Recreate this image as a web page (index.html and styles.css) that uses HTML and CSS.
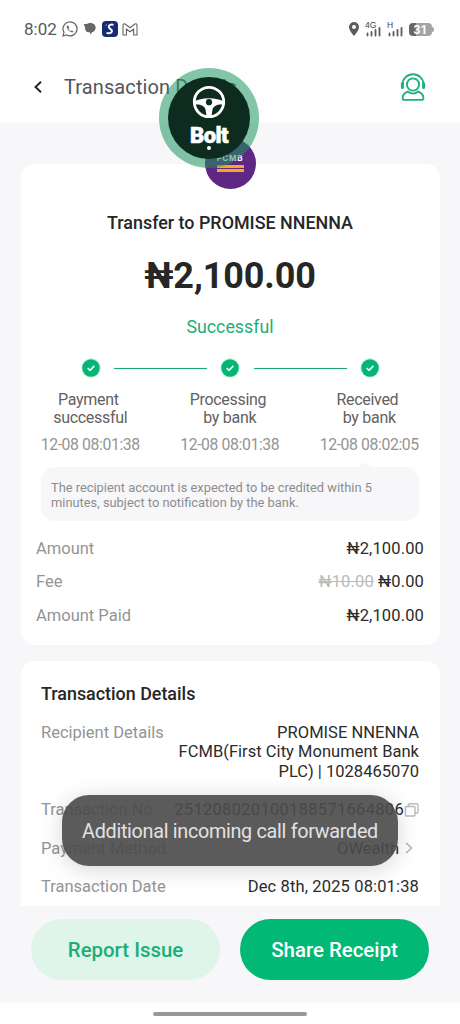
FILE: index.html
```html
<!DOCTYPE html>
<html lang="en">
<head>
<meta charset="utf-8">
<title>Transaction Details</title>
<link rel="stylesheet" href="styles.css">
</head>
<body>
<div class="screen">
  <div class="status">
    <span class="clock">8:02</span>
    <svg class="s-wa" width="16" height="16" viewBox="0 0 16 16" fill="none" stroke="#666" stroke-width="1.2"><path d="M1 15l1-3.600A7 7 0 1 1 4.700 14z"/><path d="M5.200 4.500c-1 1.200-.2 3.300 1.500 4.900s3.800 2.500 4.900 1.300l-1.700-1.300-1 .7c-1.100-.5-2-1.400-2.400-2.400l.7-.9-.8-2z" fill="#666" stroke="none"/></svg>
    <svg class="s-chat" width="14" height="14" viewBox="0 0 14 14" fill="#666"><path d="M.8 2h3C5.500 1 8 .8 9.700 1.600a4.300 4.300 0 0 1 2 6.800c-.8 1-1.700 1.600-2.500 1.700L7.500 12.600 6.800 10.300H5.300C3.500 10.300 2 8.500 2 5.500z"/></svg>
    <svg class="s-app" width="16" height="16" viewBox="0 0 16 16"><rect width="16" height="16" rx="4" fill="#152c70"/><path d="M11.500 3.800C9 3 6.500 4.200 6.800 6.200S10.400 8.300 10 10.300 6.500 12.500 4.500 11.800" fill="none" stroke="#fff" stroke-width="1.900"/><path d="M3.500 4.500l1.500-1" stroke="#9fb0dd"/></svg>
    <svg class="s-mail" width="16" height="13" viewBox="0 0 16 13" fill="none" stroke="#666" stroke-width="1.100"><path d="M1 2.300C1 .8 2.500.4 3.500 1.200L8 4.700l4.500-3.500C13.500.4 15 .8 15 2.300V12h-3.400V6L8 8.800 4.400 6v6H1z"/></svg>
    <span class="grow"></span>
    <svg class="s-pin" width="10" height="14" viewBox="0 0 10 14"><path d="M5 0a5 5 0 0 1 5 5c0 3.500-5 9-5 9S0 8.500 0 5a5 5 0 0 1 5-5zm0 3a2 2 0 1 0 0 4 2 2 0 0 0 0-4z" fill="#5c5c5c" fill-rule="evenodd"/></svg>
    <svg class="s-sig" width="17" height="16" viewBox="0 0 17 16"><text x="0" y="7" class="net">4G</text><path d="M2.500 14.500v-2M6.500 14.500v-3.500M10.500 14.500V9M14.500 14.500V7" stroke="#5c5c5c" stroke-width="1.800" stroke-linecap="round"/></svg>
    <svg class="s-sig2" width="17" height="16" viewBox="0 0 17 16"><text x="0" y="7" class="net">H</text><path d="M2.500 14.500v-2M6.500 14.500v-3.500M10.500 14.500V9M14.500 14.500V7" stroke="#5c5c5c" stroke-width="1.800" stroke-linecap="round"/></svg>
    <span class="battery">31</span><i class="cap"></i>
  </div>
  <div class="header">
    <svg class="back" width="8" height="12" viewBox="0 0 8 12" fill="none" stroke="#222" stroke-width="1.900"><path d="M7 .8L1.500 6 7 11.200"/></svg>
    <span class="title">Transaction Details</span>
    <svg class="agent" width="26" height="28" viewBox="0 0 26 28" fill="none" stroke="#1fb07c" stroke-width="1.900"><circle cx="13" cy="11.500" r="6.100"/><path d="M2.600 11A10.400 9.800 0 0 1 23.400 11"/><path d="M2.400 10.500v4M23.600 10.500v4" stroke-width="3" stroke-linecap="round"/><path d="M7.700 18.600c-3 1.100-5 3.500-5.100 6.300-.1 1.200.6 2 1.700 2h17.400c1.100 0 1.800-.8 1.700-2-.1-2.800-2.100-5.200-5.100-6.300-3.400 2.600-7.200 2.600-10.600 0z"/></svg>
  </div>

  <div class="content">
    <div class="card summary">
      <div class="bank"><span class="bname">FCMB</span><i></i><i></i></div>
      <div class="payee"><span>Transfer to PROMISE NNENNA</span></div>
      <div class="total"><span>₦2,100.00</span></div>
      <div class="state"><span>Successful</span></div>
      <div class="track">
        <svg class="tick" width="20" height="20" viewBox="0 0 20 20"><circle cx="10" cy="10" r="9.700" fill="#b9f2dc"/><circle cx="10" cy="10" r="8.700" fill="#06b575"/><path d="M6.600 10l2.400 2.300 4.400-4.400" fill="none" stroke="#e4fff4" stroke-width="1.600"/></svg>
        <span class="line"></span>
        <svg class="tick" width="20" height="20" viewBox="0 0 20 20"><circle cx="10" cy="10" r="9.700" fill="#b9f2dc"/><circle cx="10" cy="10" r="8.700" fill="#06b575"/><path d="M6.600 10l2.400 2.300 4.400-4.400" fill="none" stroke="#e4fff4" stroke-width="1.600"/></svg>
        <span class="line"></span>
        <svg class="tick" width="20" height="20" viewBox="0 0 20 20"><circle cx="10" cy="10" r="9.700" fill="#b9f2dc"/><circle cx="10" cy="10" r="8.700" fill="#06b575"/><path d="M6.600 10l2.400 2.300 4.400-4.400" fill="none" stroke="#e4fff4" stroke-width="1.600"/></svg>
      </div>
      <div class="steps">
        <div class="step"><div class="stage">Payment&nbsp;<br>successful</div><div class="time">12-08 08:01:38</div></div>
        <div class="step"><div class="stage">Processing&nbsp;<br>by bank</div><div class="time">12-08 08:01:38</div></div>
        <div class="step"><div class="stage">Received&nbsp;<br>by bank</div><div class="time">12-08 08:02:05</div></div>
      </div>
      <div class="note">The recipient account is expected to be credited within 5<br>minutes, subject to notification by the bank.</div>
      <div class="amounts">
        <div class="row"><span class="label">Amount</span><span>₦2,100.00</span></div>
        <div class="row"><span class="label">Fee</span><span><s>₦10.00</s> ₦0.00</span></div>
        <div class="row"><span class="label">Amount Paid</span><span>₦2,100.00</span></div>
      </div>
    </div>

    <div class="card details">
      <h2>Transaction Details</h2>
      <div class="row"><span class="label">Recipient Details</span><span class="recipient">PROMISE NNENNA<br>FCMB(First City Monument Bank<br>PLC) | 1028465070</span></div>
      <div class="row"><span class="label">Transaction No.</span><span class="val"><span class="txn">251208020100188571664806</span><svg class="copy" width="15" height="14" viewBox="0 0 15 14" fill="none" stroke="#bbb" stroke-width="1.400"><rect x="1.500" y="3.500" width="9.500" height="9.500" rx="1"/><path d="M4.500 3.500V1.700c0-.6.400-1 1-1H13c.6 0 1 .4 1 1V9c0 .6-.4 1-1 1h-2"/></svg></span></div>
      <div class="row"><span class="label">Payment Method</span><span class="val">OWealth<svg class="chev" width="8" height="12" viewBox="0 0 8 12" fill="none" stroke="#b8b8b8" stroke-width="1.600"><path d="M1 .8L6.500 6 1 11.200"/></svg></span></div>
      <div class="row"><span class="label">Transaction Date</span><span class="date">Dec 8th, 2025 08:01:38</span></div>
    </div>
  </div>

  <div class="actions">
    <div class="btn report"><span>Report Issue</span></div>
    <div class="btn share"><span>Share Receipt</span></div>
  </div>
  <div class="nav"><i></i></div>

  <div class="toast"><span>Additional incoming call forwarded</span></div>
  <div class="bubble">
    <div class="disc">
      <svg width="34" height="34" viewBox="0 0 34 34"><circle cx="17" cy="17" r="14.700" fill="none" stroke="#fff" stroke-width="2.800"/><path d="M3 16.200c3-1.500 7.500-2.900 14-2.900s11 1.400 14 2.900v3.600c-4-1-9.500.9-10.500 4.700L19.500 31h-5l-1-6.500C12.500 20.700 7 18.800 3 19.800z" fill="#fff"/><circle cx="17" cy="17.200" r="3.100" fill="#0d2b1e"/></svg>
      <div class="brand">Bolt</div>
    </div>
  </div>
</div>
</body>
</html>
```
FILE: styles.css
```css
* { box-sizing: border-box; }
body { margin: 0; background: #fff; font-family: Roboto, "Noto Sans", sans-serif; color: #262626; }
i { font-style: normal; display: block; }
svg { display: block; flex: none; }
.screen { position: relative; width: 460px; height: 1024px; overflow: hidden; display: flex; flex-direction: column; background: #fefefe; white-space: nowrap; }

.status { height: 52px; padding: 6px 26px 0 24px; display: flex; align-items: center; flex: none; }
.clock { font-size: 17px; color: #5a5a5a; width: 38px; }
.s-chat { margin-left: 5px; }
.s-app { margin-left: 5px; }
.s-mail { margin-left: 4px; }
.grow { flex: 1; }
.s-sig { margin-left: 6px; }
.s-sig2 { margin-left: 5px; }
.net { font: 500 8.500px "Liberation Sans", sans-serif; fill: #444; }
.battery { margin-left: 5px; width: 23px; height: 13px; border-radius: 4px; background: linear-gradient(90deg, #666 31%, #a3a3a3 31%); color: #fff; font-size: 12px; font-weight: 700; line-height: 14px; text-align: center; }
.cap { width: 2px; height: 5px; background: #a3a3a3; border-radius: 0 2px 2px 0; }

.header { height: 71px; padding: 0 34px 2px 34px; display: flex; align-items: center; flex: none; }
.title { margin-left: 22px; font-size: 20px; letter-spacing: .1px; color: #555; flex: 1; }

.content { height: 783px; flex: none; background: #f7f7fa; padding: 41px 20.500px 0; display: flex; flex-direction: column; gap: 16px; overflow: hidden; }
.card { background: #fff; border-radius: 14px; flex: none; }
.summary { height: 481px; }
.bank { height: 51px; width: 51px; margin: -26px auto 0; border-radius: 50%; background: #5d2783; padding-top: 16px; display: flex; flex-direction: column; align-items: center; gap: 1px; }
.bname { font: 700 8px/9px Inter, sans-serif; color: #fff; letter-spacing: .8px; margin-bottom: 1px; }
.bank i { width: 27px; height: 3px; background: #f7a823; }
.payee { margin-top: 20px; height: 28px; line-height: 28px; text-align: center; font-size: 17.900px; font-weight: 500; }
.total { margin-top: 16px; height: 46px; line-height: 46px; text-align: center; font-size: 36px; font-weight: 700; letter-spacing: -.1px; }
.state { margin-top: 16px; height: 24px; line-height: 24px; text-align: center; font-size: 17.800px; color: #1fad78; }
.track { margin-top: 19px; padding: 0 59.500px 0 60px; display: flex; align-items: center; justify-content: space-between; }
.line { width: 93px; height: 1px; margin-top: 1px; background: #1fa577; box-shadow: 0 0 1px #6fe0b8; }
.steps { margin-top: 13px; display: flex; }
.step { width: 139.500px; text-align: center; }
.stage { font-size: 16px; line-height: 18px; color: #626262; letter-spacing: -.3px; }
.time { margin-top: 9px; font-size: 15.800px; line-height: 18px; color: #949494; letter-spacing: -.4px; }
.note { position: relative; margin: 13px 20.500px 0 20.500px; height: 54px; border-radius: 14px; background: #f7f7fa; padding: 13px 10px; font-size: 12.850px; line-height: 15px; color: #8c8c8c; }
.note::before { content: ""; position: absolute; left: 318px; top: -5px; border: solid transparent; border-width: 0 6px 5px; border-bottom-color: #f7f7fa; }
.amounts { padding: 18px 15.500px 0; display: flex; flex-direction: column; gap: 13.400px; }
.row { display: flex; justify-content: space-between; font-size: 16.500px; line-height: 20px; color: #2b2b2b; }
.amounts .row > :last-child { letter-spacing: .14px; }
.label { color: #949494; }
s { color: #bbb; }

.details { height: 400px; padding: 22px 20.500px 0; }
h2 { margin: 0 0 18px; font-size: 17.900px; line-height: 22px; font-weight: 500; }
.details .row { margin-bottom: 19px; line-height: 19.400px; }
.recipient { text-align: right; letter-spacing: .03px; }
.val { display: flex; align-items: center; }
.txn { letter-spacing: .3px; }
.date { letter-spacing: .14px; }
.chev { margin: 0 6px 0 6px; }

.actions { height: 97px; flex: none; background: #f7f7fa; padding: 13px 31px 0; display: flex; justify-content: space-between; }
.btn { width: 189px; height: 61px; border-radius: 31px; font-size: 20.400px; font-weight: 500; line-height: 63px; text-align: center; }
.report { background: #e0f5ea; color: #1bae79; }
.share { background: #02b875; color: #fff; }
.nav { height: 21px; padding-top: 9px; }
.nav i { width: 154px; height: 4px; border-radius: 2px; background: #999; margin: 0 auto; }

.toast { position: absolute; left: 62px; top: 795px; width: 336px; height: 71px; border-radius: 27px; background: rgba(75, 75, 75, .91); box-shadow: 0 3px 22px rgba(0, 0, 0, .17); color: #e2e2e2; font-size: 19.800px; letter-spacing: -.3px; line-height: 74px; text-align: center; }
.bubble { position: absolute; left: 159px; top: 68px; width: 100px; height: 100px; border-radius: 50%; background: rgba(30, 150, 95, .55); padding: 9px; }
.disc { width: 82px; height: 82px; border-radius: 50%; background: #0d2b1e; display: flex; flex-direction: column; align-items: center; padding-top: 8px; }
.brand { margin-top: 5px; font: 900 22px/24px Roboto, sans-serif; letter-spacing: -.6px; color: #fff; -webkit-text-stroke: .6px #fff; position: relative; }
.brand::after { content: ""; position: absolute; left: 17px; top: 21.500px; width: 4px; height: 4px; border-radius: 50%; background: #fff; }
```
